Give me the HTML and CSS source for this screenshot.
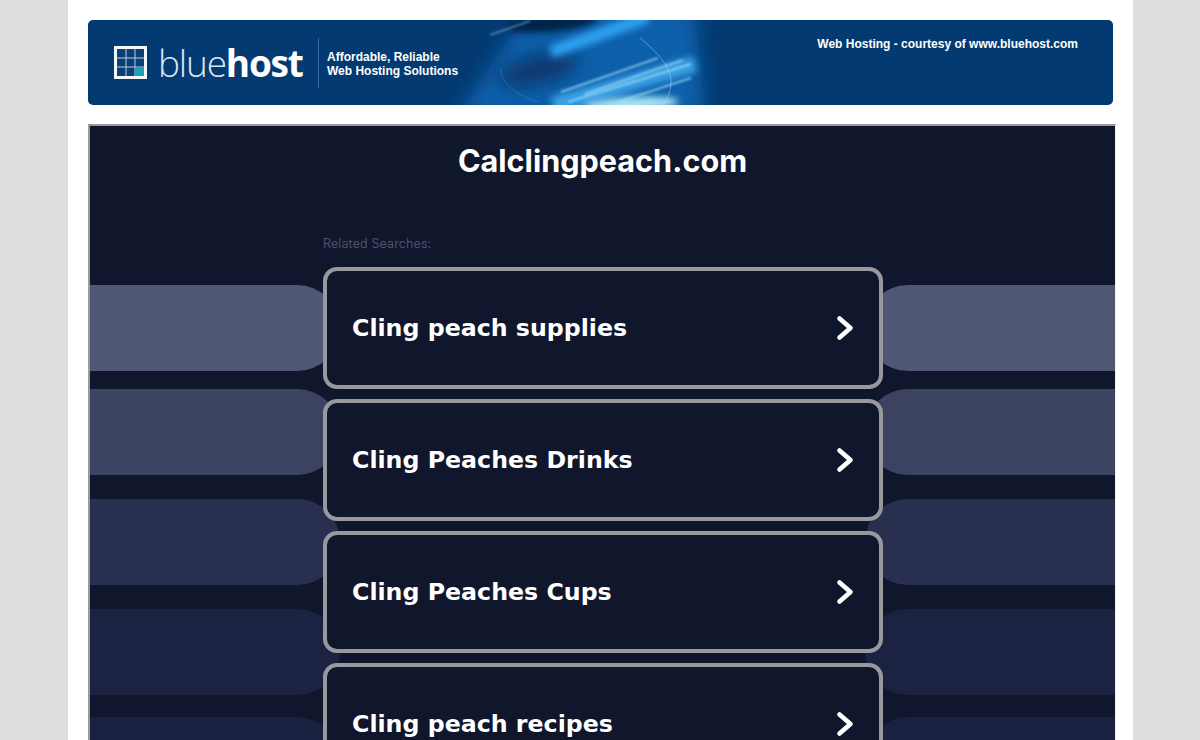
FILE: index.html
```html
<!DOCTYPE html>
<html lang="en">
<head>
<meta charset="UTF-8" />
<meta name="viewport" content="width=device-width, initial-scale=1" />
<title>Calclingpeach.com</title>
<link rel="stylesheet" href="styles.css">
</head>
<body>

  <div class="page">

    <!-- Host banner -->
    <header class="banner">
      <svg class="swoosh" viewBox="0 0 340 85" preserveAspectRatio="none" aria-hidden="true">
        <defs>
          <filter id="wide" filterUnits="userSpaceOnUse" x="-60" y="-60" width="460" height="205"><feGaussianBlur stdDeviation="9" /></filter>
          <filter id="soft" filterUnits="userSpaceOnUse" x="-60" y="-60" width="460" height="205"><feGaussianBlur stdDeviation="3.5" /></filter>
          <filter id="fine" filterUnits="userSpaceOnUse" x="-60" y="-60" width="460" height="205"><feGaussianBlur stdDeviation="1.3" /></filter>
        </defs>
        <path d="M25 95L95 -10L262 -10L272 95Z" fill="#0f60aa" filter="url(#wide)" />
        <ellipse cx="118" cy="3" rx="46" ry="9" transform="rotate(-5 118 3)" fill="#03234a" filter="url(#soft)" />
        <ellipse cx="105" cy="50" rx="42" ry="14" transform="rotate(-14 105 50)" fill="#07356c" filter="url(#wide)" />
        <path d="M120 85L262 44" stroke="#3aa2e6" stroke-width="16" fill="none" filter="url(#soft)" />
        <path d="M118 32L215 -3" stroke="#2ea2f2" stroke-width="12" fill="none" filter="url(#soft)" />
        <path d="M135 82L258 44M152 74L250 40M128 72L225 38M185 82L258 58" stroke="#a6def8" stroke-width="2.2" fill="none" filter="url(#fine)" opacity="0.7" />
        <ellipse cx="198" cy="84" rx="48" ry="7" transform="rotate(-3 198 84)" fill="#a8e6f9" filter="url(#soft)" />
        <path d="M57 15L97 1" stroke="#86bde8" stroke-width="1.2" fill="none" filter="url(#fine)" opacity="0.9" />
        <path d="M207 18C240 45 245 62 230 85" stroke="#a4d5f3" stroke-width="0.9" fill="none" opacity="0.55" />
        <path d="M68 48C66 60 80 74 105 82" stroke="#4f9ad6" stroke-width="0.8" fill="none" opacity="0.5" />
      </svg>

      <div class="logo">
        <svg class="logo-mark" viewBox="0 0 33 33" aria-hidden="true">
          <rect x="1.5" y="1.5" width="30" height="30" fill="#0b3f78" stroke="#f4f7fa" stroke-width="3" />
          <path d="M12 3V30M21 3V30M3 12H30M3 21H30" stroke="#b9cde0" stroke-width="1" />
          <rect x="21.5" y="21.5" width="8.5" height="8.5" fill="#17a5b5" />
        </svg>
        <span class="logo-name">blue<b>host</b></span>
      </div>
      <div class="tagline">Affordable, Reliable<br>Web Hosting Solutions</div>
      <div class="courtesy">Web Hosting - courtesy of www.bluehost.com</div>
    </header>

    <!-- Parked domain frame -->
    <main class="frame">
      <div class="pills pills-left">
        <div class="pill p1"></div>
        <div class="pill p2"></div>
        <div class="pill p3"></div>
        <div class="pill p4"></div>
        <div class="pill p5"></div>
      </div>
      <div class="pills pills-right">
        <div class="pill p1"></div>
        <div class="pill p2"></div>
        <div class="pill p3"></div>
        <div class="pill p4"></div>
        <div class="pill p5"></div>
      </div>

      <h1 class="domain">Calclingpeach.com</h1>

      <div class="results">
        <div class="related">Related Searches:</div>

        <a class="result" href="#">
          <span>Cling peach supplies</span>
          <svg class="chevron" viewBox="0 0 20 28" aria-hidden="true"><path d="M4.5 4.5L15.5 14L4.5 23.5" /></svg>
        </a>
        <a class="result" href="#">
          <span>Cling Peaches Drinks</span>
          <svg class="chevron" viewBox="0 0 20 28" aria-hidden="true"><path d="M4.5 4.5L15.5 14L4.5 23.5" /></svg>
        </a>
        <a class="result" href="#">
          <span>Cling Peaches Cups</span>
          <svg class="chevron" viewBox="0 0 20 28" aria-hidden="true"><path d="M4.5 4.5L15.5 14L4.5 23.5" /></svg>
        </a>
        <a class="result" href="#">
          <span>Cling peach recipes</span>
          <svg class="chevron" viewBox="0 0 20 28" aria-hidden="true"><path d="M4.5 4.5L15.5 14L4.5 23.5" /></svg>
        </a>
      </div>
    </main>

  </div>

</body>
</html>
```

FILE: styles.css
```css
/* Reset + basic */
* {
  box-sizing: border-box;
}
html, body {
  height: 100%;
  overflow: hidden;
}
body {
  margin: 0;
  background: #dddddd;
  font-family: "Liberation Sans", Arial, sans-serif;
}

/* White page column */
.page {
  width: 1065px;
  height: 740px;
  margin-left: 68px;
  padding: 20px 20px 0;
  background: #fff;
  overflow: hidden;
}

/* Banner */
.banner {
  position: relative;
  display: flex;
  align-items: center;
  width: 1025px;
  height: 85px;
  padding-left: 26px;
  background: #033a72;
  border-radius: 5px;
  overflow: hidden;
  color: #fff;
}
.swoosh {
  position: absolute;
  left: 345px;
  top: 0;
  width: 340px;
  height: 85px;
}
.logo {
  position: relative;
  display: flex;
  align-items: center;
  gap: 11px;
  width: 204px;
  height: 50px;
  border-right: 1px solid #2e6aa3;
  box-sizing: content-box;
}
.logo-mark {
  width: 33px;
  height: 33px;
  flex: none;
}
.logo-name {
  font-family: "Open Sans", sans-serif;
  font-size: 37px;
  font-weight: 300;
  letter-spacing: -1.2px;
  color: #dbe6f0;
  white-space: nowrap;
}
.logo-name b {
  font-weight: 700;
  color: #fff;
}
.tagline {
  position: relative;
  top: 1px;
  margin-left: 8px;
  font-size: 12px;
  font-weight: bold;
  line-height: 14px;
  white-space: nowrap;
}
.courtesy {
  position: absolute;
  top: 17px;
  right: 35px;
  font-size: 12px;
  font-weight: bold;
  white-space: nowrap;
}

/* Dark frame */
.frame {
  position: relative;
  width: 1028px;
  height: 640px;
  margin-top: 19px;
  background: #10172c;
  border-top: 2px solid #9a9a9e;
  border-left: 2px solid #9a9a9e;
  border-right: 1px solid #f0f0f4;
  overflow: hidden;
}
.domain {
  position: relative;
  margin: 17px 0 0;
  text-align: center;
  font-family: Inter, sans-serif;
  font-size: 30.6px;
  font-weight: 700;
  line-height: 36px;
  color: #fff;
}

/* Decorative pills behind the cards */
.pills {
  position: absolute;
  top: 159px;
  display: flex;
  flex-direction: column;
  width: 250px;
}
.pills-left {
  left: 0;
}
.pills-right {
  right: 0;
}
.pill {
  height: 86px;
  margin-bottom: 18px;
}
.pills-left .pill {
  border-radius: 0 43px 43px 0;
}
.pills-right .pill {
  border-radius: 43px 0 0 43px;
}
.pill.p1 { background: #4f5774; }
.pill.p2 { background: #3c4360; margin-bottom: 24px; }
.pill.p3 { background: #282f4f; margin-bottom: 24px; }
.pill.p4 { background: #1c2342; margin-bottom: 22px; }
.pill.p5 { background: #1a2140; }

/* Search cards */
.results {
  position: relative;
  width: 560px;
  margin: 57px 0 0 233px;
}
.related {
  margin-bottom: 15px;
  font-family: Inter, sans-serif;
  font-size: 12.5px;
  letter-spacing: 0.1px;
  line-height: 16px;
  color: #4b5170;
}
.result {
  display: flex;
  align-items: center;
  justify-content: space-between;
  height: 122px;
  margin-bottom: 10px;
  padding: 0 24px 0 25px;
  background: #10172c;
  border: 4px solid #98989e;
  border-radius: 14px;
  font-family: "DejaVu Sans", Verdana, sans-serif;
  font-size: 23.7px;
  font-weight: bold;
  color: #fff;
  text-decoration: none;
  white-space: nowrap;
}
.chevron {
  width: 20px;
  height: 28px;
  fill: none;
  stroke: #fff;
  stroke-width: 4.6;
  stroke-linecap: round;
  stroke-linejoin: round;
}
```
